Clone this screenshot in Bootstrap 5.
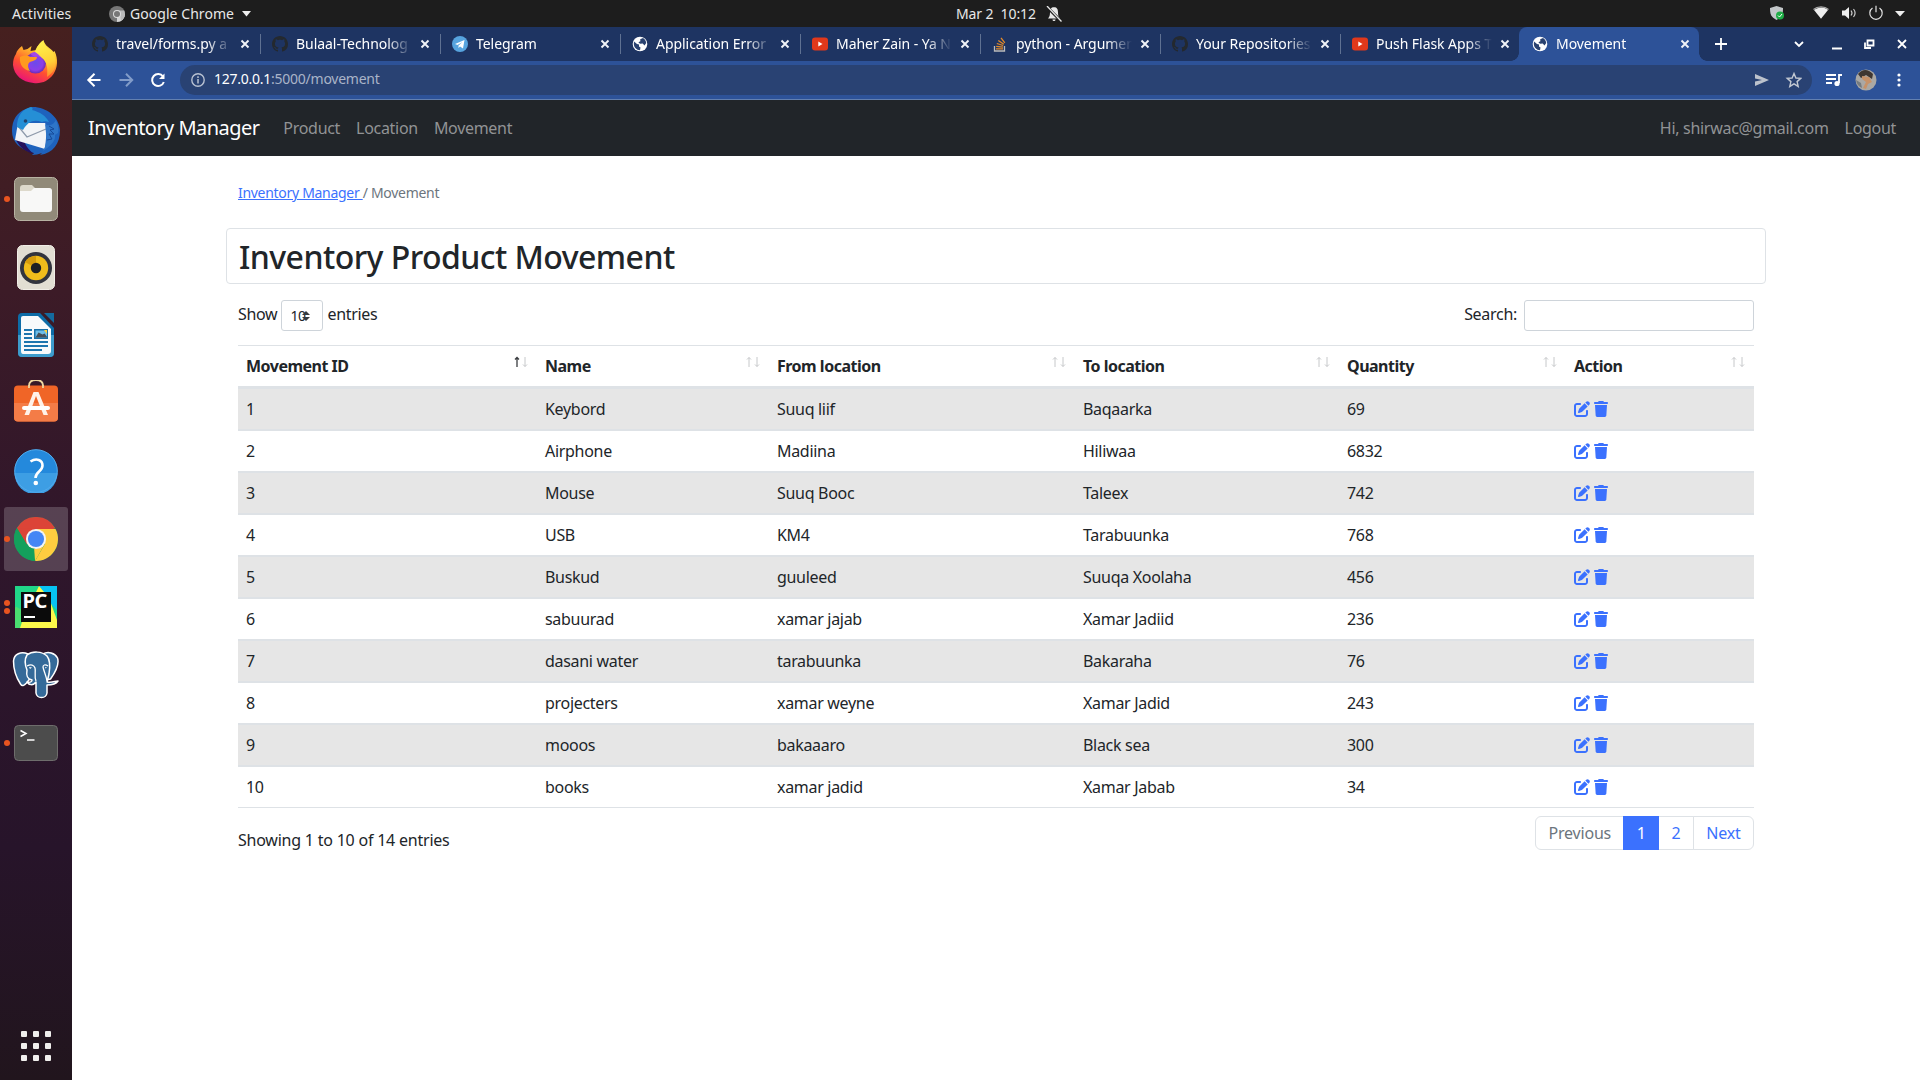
<!DOCTYPE html>
<html lang="en">
<head>
<meta charset="utf-8">
<title>Movement</title>
<meta name="viewport" content="width=device-width, initial-scale=1">
<link href="https://cdn.jsdelivr.net/npm/bootstrap@5.3.0/dist/css/bootstrap.min.css" rel="stylesheet">
<style>
  :root { --ui: "Noto Sans", "Open Sans", sans-serif; }
  body { font-family: var(--ui); font-size: 16px; letter-spacing: -.3px; color: #212529; width: 1920px; height: 1080px; overflow: hidden; background: #fff; }
  svg { display: block; flex: none; }
  .desk-bar { height: 27px; background: #1d1d1d; color: #e8e8e8; font-size: 14px; letter-spacing: -.2px; display: grid; grid-template-columns: 956px 1fr auto; line-height: 26px; }
  .desk-bar .act { padding-left: 4px; width: 101px; letter-spacing: .1px; }
  .desk-bar .app { padding-left: 1px; letter-spacing: .05px; }
  .desk-bar .clock { width: 90px; white-space: pre; letter-spacing: -.1px; }
  .dock { width: 72px; height: 1053px; background: linear-gradient(#46201f 0, #3c1b27 25%, #2f162b 50%, #27142a 78%, #21151d 100%); padding-top: 2px; }
  .dock-slot { height: 68px; width: 72px; display: flex; align-items: center; justify-content: center; position: relative; }
  .dock-slot.is-active::before { content: ""; position: absolute; inset: 2px 4px; border-radius: 3px; background: rgba(255,255,255,.19); }
  .dock-slot svg { position: relative; }
  .pips { position: absolute; left: 4px; top: 50%; transform: translateY(-50%); display: grid; gap: 2px; z-index: 2; }
  .pips i { width: 6px; height: 6px; border-radius: 50%; background: #e95420; }
  .apps-grid { display: grid; grid-template-columns: repeat(3, 6px); gap: 6px; margin: auto auto 19px; }
  .apps-grid i { width: 6px; height: 6px; border-radius: 1px; background: #f0efed; }

  .tabstrip { height: 34px; background: #1e3462; padding-left: 7px; font-size: 14px; color: #fff; }
  .btab { width: 180px; height: 34px; padding-left: 13px; position: relative; display: flex; align-items: center; flex: none; }
  .btab + .btab:not(.on)::before { content: ""; position: absolute; left: 1px; top: 7px; width: 1px; height: 20px; background: #5f7192; }
  .btab .ttl { width: 116px; margin-left: 8px; white-space: nowrap; letter-spacing: -.05px; line-height: 22px; -webkit-mask-image: linear-gradient(90deg, #000 78%, transparent); mask-image: linear-gradient(90deg, #000 78%, transparent); }
  .btab .x { margin-left: 8px; }
  .btab.on { background: #2d5298; border-radius: 8px 8px 0 0; }
  .btab.on::before, .btab.on::after { content: ""; position: absolute; bottom: 0; width: 8px; height: 8px; }
  .btab.on::before { left: -8px; background: radial-gradient(circle at 0 0, transparent 7.5px, #2d5298 8px); }
  .btab.on::after { right: -8px; background: radial-gradient(circle at 100% 0, transparent 7.5px, #2d5298 8px); }
  .toolbar-row { height: 39px; background: #2d5298; border-bottom: 1px solid #6380b0; padding-left: 14px; }
  .omni { width: 1632px; height: 30px; border-radius: 15px; background: #294273; padding: 0 10px 0 11px; font-size: 14px; line-height: 28px; color: #a9b4c8; letter-spacing: -.25px; }
  .omni b { color: #fff; font-weight: 400; }
  .omni .url { margin-left: 9px; padding-bottom: 2px; }

  .site-nav { height: 56px; background: #212529; padding: 0 24px 0 16px; }
  .site-nav .navbar-brand { font-size: 20px; letter-spacing: -.55px; color: #fff; margin-right: 16px; }
  .site-nav .nav-link { color: #919395; padding: 8px; }
  .crumb { font-size: 14px; color: #6c757d; padding-top: 26px; line-height: 21px; white-space: pre; }
  .crumb a, .page-link { color: #3b71fe; }
  .title-box { height: 56px; border: 1px solid #dee2e6; border-radius: 4px; margin-top: 25px; padding: 1px 12px 0; }
  .title-box h2 { font-size: 32px; line-height: 38px; font-weight: 500; letter-spacing: -.55px; margin: 0; }
  .ctl { height: 31px; border: 1px solid #ced4da; border-radius: 3px; background: #fff; }
  .len-row { line-height: 24px; }
  .len-row > .cap { padding-bottom: 3px; }
  .len-box { width: 42px; margin: 0 4px; font-size: 14px; letter-spacing: -.5px; padding-left: 8px; position: relative; line-height: 29px; }
  .len-box svg { position: absolute; left: 19px; top: 10px; }
  .find-row { line-height: 29px; }
  .find-box { width: 230px; margin-left: 7px; }
  .moves { width: 1516px; table-layout: fixed; border-collapse: separate; border-spacing: 0; margin: 14px 0 8px; }
  .moves th, .moves td { padding: 8px; border-top: 1px solid #dee2e6; line-height: 24px; }
  .moves td { height: 42px; border-bottom: 1px solid #dee2e6; }
  .moves th { height: 43px; border-bottom: 2px solid #dee2e6; font-weight: 700; letter-spacing: -.5px; }
  .moves th div { display: flex; justify-content: space-between; }
  .moves th svg { margin: 2px 1px 0 0; }
  .moves tbody tr:nth-child(odd) td { background: #e6e6e6; }
  .moves td a { display: inline-flex; color: #3b71fe; vertical-align: -2px; }
  .moves td:last-child { padding-top: 7px; padding-bottom: 7px; }
  .pagination .page-link { height: 34px; padding: 0 12.400px; line-height: 32px; border-color: #dee2e6; text-align: center; letter-spacing: -.2px; }
  .pagination .active .page-link { background: #3b71fe; border-color: #3b71fe; color: #fff; }
  .pagination .disabled .page-link { color: #6c757d; background: #fff; }
</style>
<script src="https://cdn.jsdelivr.net/npm/bootstrap@5.3.0/dist/js/bootstrap.bundle.min.js"></script>
</head>
<body>
<svg width="0" height="0" class="position-absolute">
  <symbol id="i-edit" viewBox="0 0 512 512"><path fill="currentColor" d="M471.6 21.7c-21.9-21.9-57.3-21.9-79.2 0L362.3 51.7l97.9 97.9 30.1-30.1c21.9-21.9 21.9-57.3 0-79.2L471.6 21.7zm-299.2 220c-6.1 6.1-10.8 13.6-13.5 21.9l-29.6 88.8c-2.9 8.6-.6 18.1 5.8 24.6s15.9 8.7 24.6 5.8l88.8-29.6c8.2-2.7 15.7-7.4 21.9-13.5L437.7 172.3 339.7 74.3 172.4 241.7zM96 64C43 64 0 107 0 160V416c0 53 43 96 96 96H352c53 0 96-43 96-96V320c0-17.7-14.3-32-32-32s-32 14.3-32 32v96c0 17.7-14.3 32-32 32H96c-17.7 0-32-14.3-32-32V160c0-17.7 14.3-32 32-32h96c17.7 0 32-14.3 32-32s-14.3-32-32-32H96z"/></symbol>
  <symbol id="i-trash" viewBox="0 0 448 512"><path fill="currentColor" d="M135.2 17.7L128 32H32C14.3 32 0 46.3 0 64S14.3 96 32 96H416c17.7 0 32-14.3 32-32s-14.3-32-32-32H320l-7.2-14.3C307.4 6.8 296.3 0 284.2 0H163.8c-12.1 0-23.2 6.8-28.6 17.7zM416 128H32L53.2 467c1.6 25.3 22.6 45 47.9 45H346.9c25.3 0 46.3-19.7 47.9-45L416 128z"/></symbol>
  <symbol id="i-sort" viewBox="0 0 14 12"><g fill="none" stroke="#c6c8ca"><path d="M3 11V1.500M1 3.500l2-2 2 2M11 1v9.500M9 8.500l2 2 2-2"/></g></symbol>
  <symbol id="i-asc" viewBox="0 0 14 12"><path fill="none" stroke="#3a3d40" stroke-width="1.300" d="M3 11V1.500M1 3.500l2-2 2 2"/><path fill="none" stroke="#c6c8ca" d="M11 1v9.500M9 8.500l2 2 2-2"/></symbol>
  <symbol id="i-hub" viewBox="0 0 16 16"><path fill="#24292f" d="M8 0C3.580 0 0 3.580 0 8c0 3.540 2.290 6.530 5.470 7.590.4.070.550-.170.550-.380 0-.190-.010-.820-.010-1.490-2.010.370-2.530-.490-2.690-.940-.090-.230-.480-.940-.820-1.130-.280-.150-.680-.520-.010-.530.630-.010 1.080.580 1.230.820.720 1.210 1.870.870 2.330.660.070-.520.280-.870.510-1.070-1.780-.2-3.640-.890-3.640-3.950 0-.870.310-1.590.820-2.150-.080-.2-.360-1.020.080-2.120 0 0 .670-.210 2.200.820.640-.180 1.320-.270 2-.270s1.360.090 2 .270c1.530-1.040 2.200-.820 2.200-.820.440 1.100.160 1.920.080 2.120.510.560.820 1.270.820 2.150 0 3.070-1.870 3.750-3.650 3.950.290.250.540.730.540 1.480 0 1.070-.010 1.930-.010 2.200 0 .210.150.460.550.380A8.010 8.010 0 0 0 16 8c0-4.420-3.580-8-8-8z"/></symbol>
  <symbol id="i-tube" viewBox="0 0 16 16"><rect y="1.500" width="16" height="13" rx="3" fill="#e0381b"/><path d="M6.300 5.500v5L10.500 8z" fill="#fff"/></symbol>
  <symbol id="i-globe" viewBox="0 0 16 16"><circle cx="8" cy="8" r="7.300" fill="#fff"/><path d="M2 5.500l3 2.500 2 .5v2l1.500 1-.5 2.800C4.500 14 2 11.500 1.800 8zM8.200 3.200L11 2c2 1 3 3 3.200 5l-1.700 2.500-1.800-2-2.700.3-1.600-1.600 2-1z" fill="#2a4270"/></symbol>
  <symbol id="i-x" viewBox="0 0 10 10"><path d="M1.500 1.500l7 7m0-7l-7 7" stroke="#f0f3f8" stroke-width="1.900"/></symbol>
</svg>

<header class="desk-bar">
  <div class="d-flex align-items-center ps-2"><span class="act">Activities</span>
    <svg width="16" height="16" viewBox="0 0 16 16" class="me-1"><circle cx="8" cy="8" r="8" fill="#777"/><path d="M8 8h8A8 8 0 0 1 8 16z" fill="#d5d5d5"/><path d="M8 4.500h7.200A8 8 0 0 1 12 14.800L11 9z" fill="#bbb"/><circle cx="8" cy="8" r="4" fill="#ddd"/><circle cx="8" cy="8" r="3" fill="#777"/></svg>
    <span class="app">Google Chrome</span>
    <svg width="9" height="6" viewBox="0 0 9 6" class="ms-2"><path d="M0 0h9L4.500 5.500z" fill="#eee"/></svg></div>
  <div class="d-flex align-items-center"><span class="clock">Mar 2  10:12</span>
    <svg width="16" height="16" viewBox="0 0 16 16"><path d="M8 1.200c3 0 4 2 4 5 0 3 .5 4.600 2 6.300H2c1.500-1.700 2-3.300 2-6.300 0-3 1-5 4-5zM6.500 13.500h3c0 2-3 2-3 0z" fill="#e8e8e8"/><path d="M.5.500l15 15" stroke="#1d1d1d" stroke-width="3"/><path d="M1 0l14.500 15.500" stroke="#e8e8e8" stroke-width="1.300"/></svg></div>
  <svg width="150" height="26" viewBox="0 0 150 26"><path d="M0 8l6.500-2 6.500 2c0 6-1 9-6.500 12C1 17 0 14 0 8z" fill="#c3c7c9"/><circle cx="10" cy="15.500" r="4" fill="#1fae46"/><path d="M8 15.500l1.500 1.500 2.500-3" fill="none" stroke="#fff"/>
    <path d="M44 10c4-3.500 11-3.500 14 0l-7 8.800z" fill="#eee"/><path d="M43.500 9.500c4-3.500 11-3.500 15 0" fill="none" stroke="#aaa" stroke-width="1.300"/>
    <path d="M72 10.500h3l4-3.500v12l-4-3.500h-3z" fill="#eee"/><path d="M81 10.500q2 2.500 0 5M83.500 9q3.200 4 0 8" fill="none" stroke="#ccc" stroke-width="1.200"/>
    <path d="M102.500 8a6.200 6.200 0 1 0 7 0M106 5.800v6.500" fill="none" stroke="#e5e5e5" stroke-width="1.200"/><path d="M125 11h10l-5 5.500z" fill="#eee"/></svg>
</header>

<div class="d-flex">
  <aside class="dock d-flex flex-column">
    <div class="dock-slot"><svg width="48" height="48" viewBox="0 0 48 48">
      <defs><linearGradient id="ff" x1=".8" y1="0" x2=".3" y2="1"><stop offset="0" stop-color="#fff44f"/><stop offset=".35" stop-color="#ffb52b"/><stop offset=".65" stop-color="#ff5130"/><stop offset="1" stop-color="#e8107c"/></linearGradient><radialGradient id="fp"><stop offset="0" stop-color="#6a4bea"/><stop offset=".7" stop-color="#8b3ee8"/><stop offset="1" stop-color="#6a2bb5"/></radialGradient>
      <linearGradient id="fy" x1=".5" y1="0" x2=".7" y2="1"><stop offset="0" stop-color="#fff04c"/><stop offset=".6" stop-color="#ffd037"/><stop offset="1" stop-color="#ff8a2b"/></linearGradient></defs>
      <path d="M4 15c.5-3 3-6 6-8l1.500 4 4-1 4-3-1 5 6-1c1-5 4-8 7-10 1 6 7 8 10 12l1-1c4 8 3 17-1 23-5 7-12 10-20 9C10 43 2 36 1 26c0-5 1-8 3-11z" fill="url(#ff)"/>
      <circle cx="23.500" cy="24" r="10.500" fill="url(#fp)"/>
      <path d="M8 18c4-2 8-2 10 0l7 0c0 3-4 4-7 5-3 2-2 6 0 9-6-1-11-6-10-14z" fill="#ff9a1f"/><path d="M18 15c7-5 16-1 17 7-3-4-7-5-12-4z" fill="#a348e8"/><path d="M31 2c1 6 7 8 10 12 5 9 3 18-6 24 1-9 0-15-5-19-3-3-5-5-7-6 1-5 5-9 8-11z" fill="url(#fy)"/></svg></div>
    <div class="dock-slot"><svg width="50" height="50" viewBox="0 0 50 50"><path d="M20 1c14-1 28 9 29 23 0 14-7 23-20 25l2-2c-3 1-7 2-10 2l2-2C9 44 1 36 1 25 1 14 6 6 15 3z" fill="#1e62bd"/><path d="M5 34c4 8 10 12 18 14-6-5-9-9-10-14z" fill="#24105c"/><path d="M7 17l27 0 2 4-2 22L4 34z" fill="#f2f4f7"/><path d="M7 20l9 11 19-8" fill="none" stroke="#8e9aab" stroke-width="1.300"/><path d="M6 21C6 9 12 3 20 1c2 1 2 2 1 3 8 2 14 6 17 12-3-1-5-1-7 0-9-3-14 0-19 8z" fill="#258fd6"/><path d="M34 18c5 3 9 0 11-4 2 5 3 9 2 13l-3 2c1 5-4 11-12 16 3-5 4-11 3-18z" fill="#2e75c8"/><path d="M38 20l5 3-4 1 4 4-5 0 3 5-5 1" fill="none" stroke="#164a99"/><circle cx="14.500" cy="15" r="1.800" fill="#23436d"/></svg></div>
    <div class="dock-slot"><span class="pips"><i></i></span><svg width="44" height="44" viewBox="0 0 44 44"><rect x=".5" y=".5" width="43" height="43" rx="5" fill="#918a79" stroke="#b8b3a3"/><path d="M6 11q0-3 3-3h9l3 3h13q4 0 4 4v10H6z" fill="#ddd9cb"/><path d="M6 14h11l3-3h15q3 0 3 3v18q0 3-3 3H9q-3 0-3-3z" fill="#f8f8f7"/></svg></div>
    <div class="dock-slot"><svg width="38" height="46" viewBox="0 -1 38 46"><rect x=".5" y=".5" width="37" height="44" rx="5" fill="#e2ded3" stroke="#f1eee7"/><circle cx="19" cy="23" r="16" fill="#32343e"/><circle cx="19" cy="23" r="12.200" fill="#f0bc1b"/><path d="M19 23L8 17a12 12 0 0 1 11-6z" fill="#d69b0c"/><circle cx="19" cy="23" r="5.200" fill="#1d1f25"/></svg></div>
    <div class="dock-slot"><svg width="38" height="46" viewBox="0 0 38 46"><path d="M5 1h18l14 15v25q0 4-4 4H5q-4 0-4-4V5q0-4 4-4z" fill="#0d6ca7"/><path d="M1 23h36v18q0 4-4 4H5q-4 0-4-4z" fill="#3d9ccc"/><path d="M27 1h10v10z" fill="#146a9e"/><path d="M6 4h15l13 13v22q0 3-3 3H6q-2 0-2-3V6q0-2 2-2z" fill="#f8fafb"/><path d="M7 18h8M7 22h8M7 26h8M7 30h24M7 34h24M7 38h18" stroke="#1d75ae" stroke-width="1.900"/><path d="M17 17h14v10H17z" fill="#176fa7"/><path d="M18.500 18.500H30v7H18.500z" fill="#6dbde8"/><path d="M27 18h3v4z" fill="#ffd23c"/><path d="M18.500 25.500l3-5 4 2 2-1 3 4z" fill="#454f58"/></svg></div>
    <div class="dock-slot"><svg width="44" height="46" viewBox="0 1 44 46"><path d="M15 8V7q0-6 7-6t7 6v1" fill="none" stroke="#efd7a0" stroke-width="1.800"/><rect y="6.500" width="44" height="36" rx="4" fill="#f06527"/><path d="M0 24h44v14.500q0 4-4 4H4q-4 0-4-4z" fill="#f47c47"/><path d="M15 6v3M29 6v3" stroke="#efd7a0" stroke-width="1.800"/><path d="M19.500 13h5L34 36h-4.500L22 17l-7 19h-4.500z" fill="#fff2e9"/><rect x="8" y="27" width="28" height="4" rx="2" fill="#fff"/></svg></div>
    <div class="dock-slot"><svg width="44" height="44" viewBox="0 0 44 44"><circle cx="22" cy="22" r="21.500" fill="#2489dc"/><path d="M.5 24h43a21.500 21.500 0 0 1-43 0z" fill="#3d9ee4"/><circle cx="22" cy="22" r="21.300" fill="none" stroke="#51aaeb"/><path d="M16.500 12.500c6-4 12-1.500 12 4 0 6-7 6-7 12.500" fill="none" stroke="#fff" stroke-width="2.600"/><circle cx="21.800" cy="34" r="2.300" fill="#fff"/></svg></div>
    <div class="dock-slot is-active"><span class="pips"><i></i></span><svg width="44" height="44" viewBox="0 0 48 48"><circle cx="24" cy="24" r="24" fill="#14a05c"/><path d="M24 24L3.200 12A24 24 0 0 1 44.800 12z" fill="#dc4437"/><path d="M24 13h21.300A24 24 0 0 1 23 48L34 29z" fill="#ffcd40"/><path d="M3.200 12L14 30l2-13 8-4z" fill="#dc4437"/><path d="M3.200 12L14 30q4 5 10 5l-1 13A24 24 0 0 1 3.200 12z" fill="#14a05c"/><path d="M33.500 29.500L23 48l-1-13z" fill="#ffcd40"/><circle cx="24" cy="24" r="11" fill="#f4f4f4"/><circle cx="24" cy="24" r="8.800" fill="#4486f5"/></svg></div>
    <div class="dock-slot"><span class="pips"><i></i><i></i></span><svg width="42" height="42" viewBox="0 0 42 42"><path fill="#21d789" d="M0 0h42v42H0z"/><path d="M24 0h18v24L31 13z" fill="#07c3f2"/><path d="M0 20l14 8-4 14H0z" fill="#4ade70"/><path d="M24 0l10 12 8 22v8H5l3-9z" fill="#fcf84a"/><path d="M24 0L8 8 0 22V0z" fill="#21d789"/><rect x="6" y="6" width="30" height="30" fill="#0b0b0b"/><text x="7.500" y="22" fill="#fff" font-family="Noto Sans, sans-serif" font-weight="700" font-size="20" letter-spacing="-.3">PC</text><path d="M9 30h11v2H9z" fill="#fff"/></svg></div>
    <div class="dock-slot"><svg width="48" height="48" viewBox="0 0 48 48"><g fill="#356a99" stroke="#fff" stroke-width="1.500" stroke-linejoin="round"><path d="M16 3C9 0 2 3 1.500 10c0 8 3 17 7 23 2 3 4 1 6-1l4-5z"/><path d="M31 3c5-3 12-1 14.500 4 2 6-2 14-7 21l-5 1z"/><path d="M15 4c5-4 15-4 20 1 4 5 3 12 2 18l-2 8c5 1 8-1 11-1-2 3-7 4-11 4v8c-1 6-10 6-11 0V31c-3 4-7 3-9 0 4 1 5-1 5-2-5-1-6-4-5-10-2-5-3-10 0-15z"/></g><path d="M15 15c4-2 7-1 8 2 1 4-1 8 1 13M36 15c-3-2-5-1-5 1 1 5 3 8 4 14" fill="none" stroke="#fff" stroke-width="1.300"/><path d="M17 16l3 .5-2 1.500zM33 16l2 .5-1.500 1z" fill="#fff"/></svg></div>
    <div class="dock-slot"><span class="pips"><i></i></span><svg width="44" height="36" viewBox="0 0 44 36"><rect x=".5" y=".5" width="43" height="35" rx="4" fill="#4c4c4c" stroke="#6e6d6c"/><path d="M6.500 5.500l5.500 3-5.500 3" fill="none" stroke="#fff" stroke-width="1.500"/><path d="M13 15h7.500" stroke="#fff" stroke-width="1.500"/></svg></div>
    <div class="apps-grid"><i></i><i></i><i></i><i></i><i></i><i></i><i></i><i></i><i></i></div>
  </aside>

  <div class="flex-grow-1">
    <div class="tabstrip d-flex align-items-center">
      <div class="btab"><svg width="16" height="16"><use href="#i-hub"/></svg><span class="ttl">travel/forms.py a</span><svg class="x" width="10" height="10"><use href="#i-x"/></svg></div>
      <div class="btab"><svg width="16" height="16"><use href="#i-hub"/></svg><span class="ttl">Bulaal-Technolog</span><svg class="x" width="10" height="10"><use href="#i-x"/></svg></div>
      <div class="btab"><svg width="16" height="16" viewBox="0 0 16 16"><circle cx="8" cy="8" r="8" fill="#57a4df"/><path d="M3 8l9.500-4-1.500 8.500-3-2-1.500 1.500V9.500L10.500 6 5.500 9z" fill="#fff"/></svg><span class="ttl">Telegram</span><svg class="x" width="10" height="10"><use href="#i-x"/></svg></div>
      <div class="btab"><svg width="16" height="16"><use href="#i-globe"/></svg><span class="ttl">Application Error</span><svg class="x" width="10" height="10"><use href="#i-x"/></svg></div>
      <div class="btab"><svg width="16" height="16"><use href="#i-tube"/></svg><span class="ttl">Maher Zain - Ya N</span><svg class="x" width="10" height="10"><use href="#i-x"/></svg></div>
      <div class="btab"><svg width="16" height="16" viewBox="0 0 16 16"><path d="M2.500 10v5h10v-5" fill="none" stroke="#bcbbbb" stroke-width="1.300"/><path d="M4 12.800h7M4.200 10.300l6.800.8M4.800 7.500l6.400 2M6.300 4.500l5.500 3.700M9 1.800l3.800 5" stroke="#e48a28" stroke-width="1.300"/></svg><span class="ttl">python - Argumen</span><svg class="x" width="10" height="10"><use href="#i-x"/></svg></div>
      <div class="btab"><svg width="16" height="16"><use href="#i-hub"/></svg><span class="ttl">Your Repositories</span><svg class="x" width="10" height="10"><use href="#i-x"/></svg></div>
      <div class="btab"><svg width="16" height="16"><use href="#i-tube"/></svg><span class="ttl">Push Flask Apps T</span><svg class="x" width="10" height="10"><use href="#i-x"/></svg></div>
      <div class="btab on"><svg width="16" height="16"><use href="#i-globe"/></svg><span class="ttl">Movement</span><svg class="x" width="10" height="10"><use href="#i-x"/></svg></div>
      <svg width="221" height="34" viewBox="1699 27 221 34" fill="none" stroke="#fff" stroke-width="1.800"><path d="M1715 44h12M1721 38v12M1795 42l4 4 4-4"/><path d="M1832 48.500h10" stroke-width="2"/><path d="M1867.500 40.500h6v5h-6zM1865 42.500v5.500h6"/><path d="M1898 40l8 8m0-8l-8 8"/></svg>
    </div>
    <div class="toolbar-row d-flex align-items-center">
      <svg width="94" height="38" viewBox="86 61 94 38" fill="none" stroke-width="2"><g stroke="#fff"><path d="M100.500 80h-12M94.500 73.800L88.300 80l6.200 6.200"/><path d="M163 76.500a6 6 0 1 0 .8 5.500"/><path d="M164.500 73.500v5.500H159z" fill="#fff" stroke="none"/></g><path d="M119.500 80h12M126 73.800l6.200 6.200-6.200 6.200" stroke="#829cc9"/></svg>
      <div class="omni d-flex align-items-center"><svg width="14" height="14" viewBox="0 0 14 14"><circle cx="7" cy="7" r="6.200" fill="none" stroke="#b9c2d2" stroke-width="1.400"/><path d="M7 6v4.500M7 3.300v1.600" stroke="#b9c2d2" stroke-width="1.500"/></svg><span class="url"><b>127.0.0.1</b>:5000/movement</span>
        <svg width="50" height="30" viewBox="1752 65 50 30" class="ms-auto"><path d="M1755 74l14 6-14 6v-4.500l7-1.500-7-1.500z" fill="#bcc2cc"/><path d="M1794 73.500l1.900 4.500 4.900.4-3.700 3.200 1.100 4.800-4.200-2.600-4.200 2.600 1.100-4.800-3.700-3.200 4.900-.4z" fill="none" stroke="#c2c8d2" stroke-width="1.400"/></svg></div>
      <svg width="108" height="38" viewBox="1812 61 108 38"><path d="M1826 75h10M1826 79h10M1826 83h6" stroke="#fff" stroke-width="1.800"/><path d="M1842 75h-3v8" fill="none" stroke="#fff" stroke-width="1.800"/><circle cx="1837" cy="83.500" r="2.600" fill="#fff"/><circle cx="1866" cy="80" r="10.500" fill="#aaa8a4"/><path d="M1858 74q7-8 15 0l-1 5-6-4-5 3z" fill="#3f3731"/><path d="M1862 76l7 1 3 5-4 2-2 5-3-1 3-6-4-3z" fill="#c79268"/><path d="M1856 80l5 3 1 5q-5-2-6-8z" fill="#747b80"/><g fill="#fff"><circle cx="1899" cy="75" r="1.600"/><circle cx="1899" cy="80" r="1.600"/><circle cx="1899" cy="85" r="1.600"/></g></svg>
    </div>

    <nav class="site-nav navbar navbar-expand navbar-dark">
      <a class="navbar-brand" href="#">Inventory Manager</a>
      <div class="navbar-nav"><a class="nav-link" href="#">Product</a><a class="nav-link" href="#">Location</a><a class="nav-link" href="#">Movement</a></div>
      <div class="navbar-nav ms-auto"><a class="nav-link" href="#">Hi, shirwac@gmail.com</a><a class="nav-link pe-0" href="#">Logout</a></div>
    </nav>

    <main class="row g-0">
      <div class="col-10 offset-1 px-0">
        <div class="px-1"><div class="px-2">
          <div class="crumb"><a href="#">Inventory Manager </a>/ Movement</div></div></div>
        <div class="title-box d-flex align-items-center"><h2>Inventory Product Movement</h2></div>
        <div class="px-1"><div class="px-2">
          <div class="d-flex align-items-center justify-content-between mt-3">
            <div class="len-row d-flex align-items-center"><span class="cap">Show</span><span class="ctl len-box">10<svg width="10" height="10" viewBox="0 0 10 10"><path d="M5 0l4 4H1zM5 10l4-4H1z" fill="#343a40"/></svg></span><span class="cap">entries</span></div>
            <label class="find-row d-flex">Search:<input class="ctl find-box" type="search"></label>
          </div>
          <table class="moves">
            <colgroup><col style="width:299px"><col style="width:232px"><col style="width:306px"><col style="width:264px"><col style="width:227px"><col style="width:188px"></colgroup>
            <thead><tr>
              <th><div>Movement ID<svg width="14" height="12"><use href="#i-asc"/></svg></div></th>
              <th><div>Name<svg width="14" height="12"><use href="#i-sort"/></svg></div></th>
              <th><div>From location<svg width="14" height="12"><use href="#i-sort"/></svg></div></th>
              <th><div>To location<svg width="14" height="12"><use href="#i-sort"/></svg></div></th>
              <th><div>Quantity<svg width="14" height="12"><use href="#i-sort"/></svg></div></th>
              <th><div>Action<svg width="14" height="12"><use href="#i-sort"/></svg></div></th>
            </tr></thead>
            <tbody id="rows"></tbody>
          </table>
          <div class="d-flex justify-content-between align-items-start">
            <div style="padding-top:12px;letter-spacing:-.22px">Showing 1 to 10 of 14 entries</div>
            <ul class="pagination mb-0">
              <li class="page-item disabled"><a class="page-link" href="#">Previous</a></li>
              <li class="page-item active"><a class="page-link" href="#">1</a></li>
              <li class="page-item"><a class="page-link" href="#">2</a></li>
              <li class="page-item"><a class="page-link" href="#">Next</a></li>
            </ul>
          </div>
        </div></div>
      </div>
    </main>
  </div>
</div>
<script>
  const moves = [
    ["Keybord", "Suuq liif", "Baqaarka", 69],
    ["Airphone", "Madiina", "Hiliwaa", 6832],
    ["Mouse", "Suuq Booc", "Taleex", 742],
    ["USB", "KM4", "Tarabuunka", 768],
    ["Buskud", "guuleed", "Suuqa Xoolaha", 456],
    ["sabuurad", "xamar jajab", "Xamar Jadiid", 236],
    ["dasani water", "tarabuunka", "Bakaraha", 76],
    ["projecters", "xamar weyne", "Xamar Jadid", 243],
    ["mooos", "bakaaaro", "Black sea", 300],
    ["books", "xamar jadid", "Xamar Jabab", 34]
  ];
  const actions = '<a href="#" class="me-1"><svg width="16" height="16"><use href="#i-edit"/></svg></a><a href="#"><svg width="14" height="16"><use href="#i-trash"/></svg></a>';
  document.getElementById("rows").innerHTML = moves.map((m, i) =>
    `<tr><td>${i + 1}</td>${m.map(v => `<td>${v}</td>`).join("")}<td>${actions}</td></tr>`).join("");
</script>
</body>
</html>
